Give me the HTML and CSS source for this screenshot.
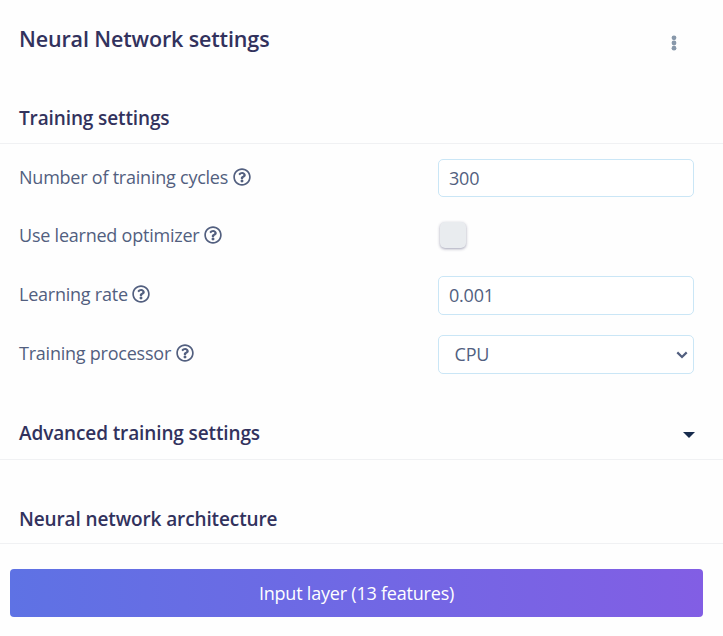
FILE: index.html
```html
<!DOCTYPE html>
<html lang="en">
<head>
<meta charset="utf-8">
<title>Neural Network settings</title>
<link rel="stylesheet" href="styles.css">
</head>
<body>
<svg class="defs" width="0" height="0" aria-hidden="true">
  <symbol id="help" viewBox="0 0 512 512">
    <path d="M256 8C119 8 8 119.100 8 256c0 137 111 248 248 248s248-111 248-248C504 119.100 393 8 256 8zm0 448c-110.500 0-200-89.400-200-200 0-110.500 89.500-200 200-200 110.500 0 200 89.500 200 200 0 110.500-89.400 200-200 200zm107.200-255.200c0 67.100-72.400 68.100-72.400 92.900V300c0 6.600-5.400 12-12 12h-45.600c-6.600 0-12-5.400-12-12v-8.700c0-35.700 27.100-50 47.600-61.500 17.600-9.800 28.300-16.500 28.300-29.600 0-17.200-22-28.700-39.800-28.700-23.200 0-33.900 11-49 30-4.100 5.100-11.500 6.100-16.700 2.100l-27.800-21.100c-5.100-3.900-6.300-11.100-2.600-16.400C184.800 131.500 214.900 112 261.800 112c49.100 0 101.400 38.300 101.400 88.800zM298 368c0 23.200-18.800 42-42 42s-42-18.800-42-42 18.800-42 42-42 42 18.800 42 42z"/>
  </symbol>
</svg>
<main class="card">
  <header class="title-bar">
    <h1>Neural Network settings</h1>
    <svg class="menu" viewBox="0 0 6 16"><circle cx="3" cy="2.800" r="2.400"/><circle cx="3" cy="8" r="2.400"/><circle cx="3" cy="13.200" r="2.400"/></svg>
  </header>
  <h2 class="section training"><span>Training settings</span></h2>
  <form class="fields">
    <div class="row">
      <label for="cycles">Number of training cycles</label><svg class="help"><use href="#help"/></svg>
      <input class="control" id="cycles" type="text" value="300">
    </div>
    <div class="row optimizer">
      <label for="optimizer">Use learned optimizer</label><svg class="help"><use href="#help"/></svg>
      <div class="slot"><input class="check" id="optimizer" type="checkbox"></div>
    </div>
    <div class="row">
      <label for="rate">Learning rate</label><svg class="help raised"><use href="#help"/></svg>
      <input class="control tall rate" id="rate" type="text" value="0.001">
    </div>
    <div class="row">
      <label for="processor">Training processor</label><svg class="help"><use href="#help"/></svg>
      <div class="control tall select" id="processor"><span>CPU</span><svg class="chevron" viewBox="0 0 12 8"><path d="M1.300 1.400 6 6l4.700-4.600"/></svg></div>
    </div>
  </form>
  <h2 class="section advanced"><span>Advanced training settings</span><i class="caret"></i></h2>
  <h2 class="section architecture"><span>Neural network architecture</span></h2>
  <div class="layer">Input layer (13 features)</div>
</main>
</body>
</html>
```
FILE: styles.css
```css
* { box-sizing: border-box; }
body {
  margin: 0;
  background: #fefefe;
  color: #525f7f;
  font: 400 18px/27px "Open Sans", sans-serif;
}
.defs { position: absolute; }
.card { height: 636px; overflow: hidden; }
h1, h2 { margin: 0; color: #32325d; font-weight: 600; }
.title-bar {
  display: flex;
  justify-content: space-between;
  height: 92px;
  padding: 24px 46px 0 19px;
}
h1 { font-size: 21.500px; line-height: 30px; letter-spacing: -.14px; }
.menu { width: 6px; height: 16px; margin-top: 11px; fill: #8898aa; }
.section {
  display: flex;
  justify-content: space-between;
  align-items: flex-end;
  padding: 0 28px 12px 19px;
  border-bottom: 1px solid #f0f1f3;
  font-size: 19px;
  line-height: 26px;
  letter-spacing: -.12px;
}
.training { height: 52px; }
.advanced { height: 67px; padding-bottom: 13px; }
.architecture { height: 84px; padding-bottom: 11px; }
.fields { padding: 5px 29px 0 19px; height: 249px; }
.row { display: flex; align-items: center; height: 58.700px; }
.optimizer { padding-bottom: 2px; }
label { white-space: nowrap; margin-top: -2px; letter-spacing: -.23px; }
.help { width: 18px; height: 18px; margin: -2px 0 0 4.500px; fill: #525f7f; }
.raised { margin-top: -3px; }
.control, .slot { width: 256px; margin-left: auto; }
.control {
  height: 38px;
  padding: 0 10px;
  border: 1px solid #cae6f6;
  border-radius: 5px;
  background: #fff;
  color: #525f7f;
  font: inherit;
  letter-spacing: -.2px;
}
.tall { height: 39px; }
.rate { padding-bottom: 2px; }
.select { display: flex; align-items: center; justify-content: space-between; padding: 0 5px 0 15.500px; }
.chevron { width: 12px; height: 8px; margin-top: 1px; fill: none; stroke: #525f7f; stroke-width: 2.200; }
.slot { display: flex; padding-left: 1.500px; }
.check {
  appearance: none;
  width: 26px;
  height: 26px;
  margin: -3px 0 0;
  border-radius: 5px;
  background: #e9ecef;
  box-shadow: 0 1px 3px rgba(50, 50, 93, .45);
}
.caret {
  margin-bottom: 8px;
  border: solid transparent;
  border-width: 6px 6px 0;
  border-top-color: #172b4d;
}
.layer {
  display: flex;
  align-items: center;
  justify-content: center;
  height: 48px;
  margin: 25px 20px 0 10px;
  border-radius: 4px;
  background: linear-gradient(87deg, #5e72e4, #825ee4);
  color: #fff;
  letter-spacing: -.21px;
}
```
